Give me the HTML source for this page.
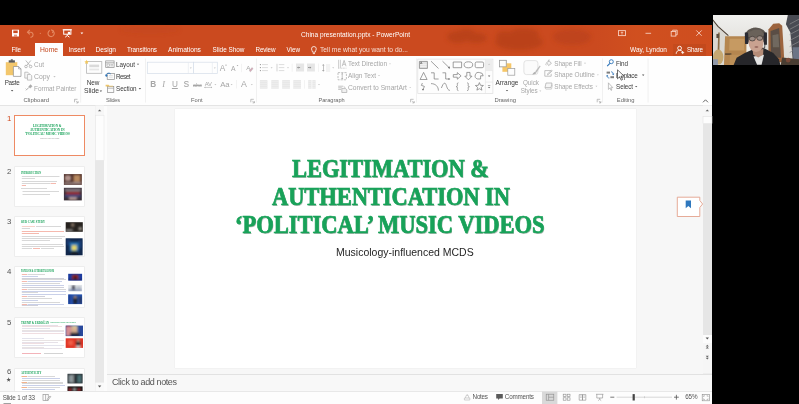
<!DOCTYPE html>
<html lang="en"><head><meta charset="utf-8"><title>China presentation.pptx - PowerPoint</title>
<style>
html,body{margin:0;padding:0;background:#000;}
body{width:799px;height:404px;position:relative;overflow:hidden;font-family:"Liberation Sans",sans-serif;}
.abs{position:absolute;}
#in{position:absolute;left:10px;top:10px;width:799px;height:404px;will-change:transform;}
#app{position:absolute;left:-10px;top:-10px;width:819px;height:424px;padding:0;overflow:hidden;}
.t{position:absolute;white-space:nowrap;}
#titlebar{left:-10px;top:25px;width:722px;height:31px;background:#CB4A1F;}
#hometab{left:35px;top:43px;width:27.5px;height:13px;background:#FEFEFE;}
#sharebtn{left:673px;top:44px;width:33px;height:12px;background:#B9431B;}
#ribbon{left:-10px;top:56px;width:722px;height:48.7px;background:#FEFEFE;border-bottom:0.8px solid #E4E4E4;}
#panel{left:-10px;top:105.5px;width:114px;height:285.5px;background:#F8F8F8;overflow:hidden;}
#gap{left:104px;top:105.5px;width:3px;height:285.5px;background:#FCFCFC;}
#pane{left:107px;top:105.5px;width:596px;height:268px;background:#F7F7F7;}
#slide{left:174.5px;top:109px;width:461px;height:259px;background:#fff;box-shadow:0 0 1px #d8d8d8;}
#notes{left:107px;top:373.5px;width:605px;height:17.5px;background:#F8F8F8;border-top:0.8px solid #E2E2E2;box-sizing:border-box;}
#status{left:-10px;top:391px;width:722px;height:30px;background:#FDFDFD;border-top:0.6px solid #E8E8E8;box-sizing:border-box;}
#vscroll{left:703px;top:105.5px;width:9px;height:268px;background:#E6E6E6;}
#pscroll{left:95.3px;top:105.5px;width:8.7px;height:285.5px;background:#E8E8E8;}
.thumb{position:absolute;left:15px;width:69px;height:39px;background:#fff;box-shadow:0 0 0 0.6px #E6E6E6;overflow:hidden;}
#webcam{left:712.5px;top:14.9px;width:86.5px;height:49.8px;background:#DDD9D0;overflow:hidden;}
svg{position:absolute;left:0;top:0;}
</style></head>
<body><div id="app"><div id="in">
<div id="titlebar" class="abs"></div>
<div id="hometab" class="abs"></div>
<div id="sharebtn" class="abs"></div>
<div id="ribbon" class="abs"></div>
<div id="panel" class="abs"></div>
<div id="pscroll" class="abs"></div>
<div id="gap" class="abs"></div>
<div id="pane" class="abs"></div>
<div id="vscroll" class="abs"></div>
<div id="slide" class="abs"></div>
<div id="notes" class="abs"></div>
<div id="status" class="abs"></div>
<div class="thumb" style="left:13.700px;top:114.7px;width:71.200px;height:41.7px;box-shadow:none;border:1.300px solid #EE8A63;box-sizing:border-box;"></div><div class="thumb" style="top:166.5px;height:39.5px;"></div><div class="thumb" style="top:217px;height:39.3px;"></div><div class="thumb" style="top:267.2px;height:40.0px;"></div><div class="thumb" style="top:317.7px;height:39.5px;"></div><div class="thumb" style="top:368.5px;height:22.5px;"></div>
<div id="webcam" class="abs"><svg width="86.500" height="49.800" viewBox="0 0 86 49.500" preserveAspectRatio="none"><defs><filter id="wb" x="-10%" y="-10%" width="120%" height="120%"><feGaussianBlur stdDeviation="0.550"/></filter><linearGradient id="wg" x1="0" y1="0" x2="0" y2="1"><stop offset="0" stop-color="#F0F0EE"/><stop offset="1" stop-color="#D9D6D0"/></linearGradient></defs><rect width="86" height="49.500" fill="url(#wg)"/><g filter="url(#wb)"><polygon points="-0.7,-0.1 -0.7,49.7 12.3,49.7 14.6,20.2 -0.7,3.9" fill="#DAD8D2"/><polyline points="-0.7,4.2 4.9,11.3 15.3,20.5" fill="none" stroke="#4A3C30" stroke-width="1"/><polygon points="12.0,21.1 33.4,21.1 33.4,49.7 10.9,49.7" fill="#B5864F"/><polygon points="16.5,23.5 31.1,23.5 31.1,35.4 16.1,35.4" fill="#C69A62"/><polygon points="12.0,38.1 18.3,38.1 18.3,39.6 12.0,39.6" fill="#5A4632"/><polygon points="16.8,39.6 30.2,39.6 30.2,49.7 16.5,49.7" fill="#BD9058"/><polygon points="33.4,29.2 39.4,29.2 39.4,39.6 33.4,39.6" fill="#F0EEE8"/><polygon points="5.2,17.3 6.7,17.3 6.4,35.1 4.6,35.1" fill="#8A6E48"/><ellipse cx="5.2" cy="41.8" rx="5.200" ry="7.500" fill="#C5A872"/><polygon points="3.4,18.8 6.1,18.8 6.1,22.9 3.4,22.9" fill="#5C5040"/><polygon points="-0.7,44.0 4.9,44.0 4.9,49.7 -0.7,49.7" fill="#9098A8"/><polygon points="55.1,14.3 59.9,8.7 65.8,8.1 68.8,10.6 71.0,47.0 55.1,47.0" fill="#9C643C"/><polygon points="57.2,15.8 65.8,12.8 67.6,42.5 57.6,42.5" fill="#5A4E44"/><polygon points="59.1,20.2 65.1,18.8 65.8,32.1 59.6,32.1" fill="#70685E"/><polygon points="74.4,-0.1 86.0,-0.1 86.0,44.0 79.2,44.0 76.9,17.3 72.5,9.1" fill="#4A4C52"/><polyline points="76.2,9.1 86.0,3.9" fill="none" stroke="#8C8C90" stroke-width=".700"/><polyline points="76.2,14.3 86.0,9.1" fill="none" stroke="#8C8C90" stroke-width=".700"/><polyline points="76.2,19.5 86.0,14.3" fill="none" stroke="#8C8C90" stroke-width=".700"/><polyline points="76.2,25.4 86.0,20.2" fill="none" stroke="#8C8C90" stroke-width=".700"/><polyline points="76.2,31.4 86.0,26.2" fill="none" stroke="#8C8C90" stroke-width=".700"/><polyline points="76.2,37.3 86.0,32.1" fill="none" stroke="#8C8C90" stroke-width=".700"/><polygon points="79.2,32.1 86.0,32.1 86.0,45.5 79.9,45.5" fill="#6C7486"/><polygon points="68.8,42.2 86.0,44.0 86.0,49.7 67.3,49.7" fill="#4A3C30"/><ellipse cx="74.7" cy="44.8" rx="2.400" ry="2.400" fill="#7A4A38"/><polygon points="20.5,49.7 23.5,42.5 31.6,37.8 40.6,33.9 51.3,33.3 59.9,37.8 65.5,44.0 67.0,49.7" fill="#25262A"/><polygon points="40.3,41.3 50.7,39.6 48.3,49.4 43.8,49.4" fill="#E4E4E4"/><polygon points="39.1,32.1 50.2,32.1 49.8,39.6 45.0,42.2 40.0,39.6" fill="#B58C78"/><ellipse cx="42.5" cy="21.0" rx="10.800" ry="8.500" fill="#5C5650"/><polygon points="31.6,17.3 34.9,17.3 34.9,28.9 31.9,28.9" fill="#2C2C30"/><polygon points="50.4,17.3 53.6,17.3 53.6,29.5 50.7,29.5" fill="#2C2C30"/><polyline points="51.7,28.9 51.3,32.9 48.0,33.9" fill="none" stroke="#2C2C30" stroke-width=".800"/><ellipse cx="42.8" cy="27.4" rx="7.400" ry="9.400" fill="#C9A290"/><polygon points="34.9,17.3 40.6,14.6 47.2,14.6 50.7,18.8 49.5,21.7 36.1,22.0" fill="#6A625A"/><polyline points="34.9,22.6 50.7,21.7" fill="none" stroke="#3A3430" stroke-width=".700"/><ellipse cx="39.1" cy="23.5" rx="3" ry="2.300" fill="#9C8C84" stroke="#3A3430" stroke-width=".700"/><ellipse cx="46.5" cy="22.9" rx="3" ry="2.300" fill="#9C8C84" stroke="#3A3430" stroke-width=".700"/><ellipse cx="43.2" cy="31.8" rx="2" ry=".800" fill="#8C5C54"/></g></svg></div>
<svg width="799" height="404" viewBox="0 0 799 404">
<g fill="#B03D17" opacity=".62" filter="url(#bl)"><ellipse cx="458" cy="37" rx="11" ry="6"/><ellipse cx="476" cy="38" rx="11" ry="5"/><ellipse cx="466" cy="33" rx="9" ry="4"/><ellipse cx="519" cy="42" rx="24" ry="8"/><ellipse cx="524" cy="34" rx="15" ry="6"/><ellipse cx="505" cy="36" rx="9" ry="5"/><ellipse cx="572" cy="37" rx="19" ry="8" opacity=".7"/><ellipse cx="150" cy="30" rx="30" ry="4" opacity=".25"/></g><rect x="596" y="25" width="116" height="31" fill="url(#tg)"/>
<defs><linearGradient id="tg" x1="0" y1="0" x2="1" y2="0"><stop offset="0" stop-color="#D4541F" stop-opacity="0"/><stop offset=".35" stop-color="#D4541F" stop-opacity=".55"/><stop offset="1" stop-color="#D4541F" stop-opacity=".35"/></linearGradient><filter id="bl" x="-30%" y="-30%" width="160%" height="160%"><feGaussianBlur stdDeviation="2"/></filter><filter id="b0" x="-5%" y="-5%" width="110%" height="110%"><feGaussianBlur stdDeviation="0.3"/></filter><filter id="b1" x="-30%" y="-30%" width="160%" height="160%"><feGaussianBlur stdDeviation="0.8"/></filter><filter id="b2" x="-30%" y="-30%" width="160%" height="160%"><feGaussianBlur stdDeviation="1.2"/></filter></defs>
<g><rect x="12" y="29.7" width="7" height="6.8" fill="#fff"/><rect x="13.3" y="30.5" width="4.4" height="2.6" fill="#CB4A1F"/><rect x="14" y="34.6" width="3" height="1.9" fill="#CB4A1F" opacity=".55"/></g>
<g fill="none" stroke="#E58A63" stroke-width="1.1"><path d="M27.6 32.2h3.6a2.6 2.6 0 0 1 0 5.0h-.8"/><path d="M29.8 30l-2.3 2.2 2.3 2.2" /></g><circle cx="40.3" cy="33.3" r=".6" fill="#E58A63"/>
<g fill="none" stroke="#E58A63" stroke-width="1.1"><path d="M53.2 31.2a3.1 3.1 0 1 1-3.2-.6"/><path d="M51.2 29.8l2.2 1.2-1 2.1"/></g>
<g fill="none" stroke="#fff" stroke-width="1"><path d="M62.7 29.8h9.2"/><rect x="63.7" y="29.8" width="7.2" height="4.4"/><path d="M67.3 34.2v1.3M65.2 37.2l2.1-1.7 2.1 1.7"/></g><circle cx="69" cy="33" r="1.3" fill="#fff"/>
<path d="M80.5 32.6h2.8l-1.4 1.7z" fill="#fff"/>
<g fill="none" stroke="#fff" stroke-width=".8"><path d="M312.6 52.2c0-1.4-1.1-1.7-1.1-3.3a2.4 2.4 0 0 1 4.8 0c0 1.6-1.1 1.9-1.1 3.3z"/><path d="M312.8 53.6h2.2"/></g>
<g fill="none" stroke="#F6CDBD" stroke-width=".9"><rect x="618.5" y="30.6" width="7" height="5"/><path d="M622 34.6v-2.6M620.8 33l1.2-1.2 1.2 1.2" stroke-width=".8"/><path d="M645.5 33.3h5.6"/><rect x="671.2" y="31.5" width="4.6" height="4.6"/><path d="M672.6 31.5v-1.3h4.6v4.6h-1.4"/><path d="M696.3 30.4l5.4 5.4M701.7 30.4l-5.4 5.4"/></g>
<g fill="none" stroke="#fff" stroke-width=".9"><circle cx="679.6" cy="48.2" r="1.9"/><path d="M676.2 53.8c0-2.4 1.6-3.4 3.4-3.4s3 .8 3.3 2"/><path d="M681.2 52.6h3M682.7 51.1v3" stroke-width=".8"/></g>
<rect x="80.4" y="58.5" width=".7" height="44" fill="#EBEBEB"/>
<rect x="145.2" y="58.5" width=".7" height="44" fill="#EBEBEB"/>
<rect x="256.0" y="58.5" width=".7" height="44" fill="#EBEBEB"/>
<rect x="416.0" y="58.5" width=".7" height="44" fill="#EBEBEB"/>
<rect x="602.2" y="58.5" width=".7" height="44" fill="#EBEBEB"/>
<rect x="647.7" y="58.5" width=".7" height="44" fill="#EBEBEB"/>
<g><rect x="5.8" y="62.2" width="11.5" height="13" fill="#F3C76C"/><rect x="8.7" y="60.3" width="6.2" height="2.3" fill="#5A5A5A"/><rect x="10.8" y="59.3" width="2" height="1.4" fill="#5A5A5A"/><path d="M13.4 66.5h5.2l2.4 2.4v7.5h-7.6z" fill="#fff" stroke="#8C8C8C" stroke-width=".7"/><path d="M18.6 66.5v2.4h2.4" fill="none" stroke="#8C8C8C" stroke-width=".6"/></g>
<path d="M10.90 90.00h2.4l-1.2 1.4z" fill="#555"/>
<g fill="none" stroke="#ABABAB" stroke-width=".8"><path d="M25.8 60.5l4.2 5.2M30.8 60.5l-4.2 5.2"/><circle cx="26" cy="66.5" r="1.3"/><circle cx="30.6" cy="66.5" r="1.3"/></g>
<g fill="#F8F8F8" stroke="#ABABAB" stroke-width=".7"><path d="M24.8 72.2h3l1.3 1.3v4.6h-4.3z"/><path d="M27.4 74.4h3l1.3 1.3v4.4h-4.3z"/></g>
<path d="M53.30 76.10h2.4l-1.2 1.4z" fill="#C4C4C4"/>
<g stroke="#ABABAB" fill="none"><path d="M26 90.3l3-3" stroke-width="1"/><path d="M28.6 86.6l2-2 1.6 1.6-2 2z" fill="#ABABAB" stroke-width=".4"/><path d="M25.5 88.5l1.2 1.2" stroke-width=".6"/></g>
<g fill="none" stroke="#999" stroke-width=".6"><path d="M74.5 102.3v-3h3"/><path d="M76.0 100.8l2 2M78.1 101.1v1.8h-1.8"/></g>
<g><rect x="86.6" y="61.6" width="15.2" height="11.7" fill="#FDFDFD" stroke="#B5B5B5" stroke-width=".8"/><rect x="89.3" y="64.6" width="9.8" height="2.6" fill="#DADADA"/><rect x="89.3" y="68.6" width="9.8" height="1.8" fill="#E6E6E6"/><path d="M86.6 59.8l.7 1.4 1.5.2-1.1 1 .3 1.5-1.4-.7-1.4.7.3-1.5-1.1-1 1.5-.2z" fill="#F2C75C"/></g>
<path d="M99.70 90.50h2.4l-1.2 1.4z" fill="#555"/>
<g fill="#FBFBFB" stroke="#8F8F8F" stroke-width=".7"><rect x="105.7" y="60.9" width="8.4" height="6.7"/><path d="M105.7 62.8h8.4" /><rect x="107" y="64" width="2.4" height="2.2" stroke-width=".5"/><path d="M110.4 64.4h2.6M110.4 65.8h2.6" stroke-width=".5"/></g>
<path d="M136.80 63.70h2.4l-1.2 1.4z" fill="#555"/>
<g><rect x="107.2" y="73.6" width="7.2" height="5.8" fill="#FBFBFB" stroke="#8F8F8F" stroke-width=".7"/><path d="M109 75.5h3.8M109 77.2h3.8" stroke="#C9C9C9" stroke-width=".5"/><path d="M106 76.2a2.8 2.8 0 0 1 4.6-2.4" fill="none" stroke="#2E74B8" stroke-width="1"/><path d="M105 74.6l1.2 2.4 1.6-1.6z" fill="#2E74B8"/></g>
<g><rect x="107.6" y="86.6" width="6.2" height="5.8" fill="#FBFBFB" stroke="#8F8F8F" stroke-width=".7"/><path d="M107.6 88.2h6.2" stroke="#8F8F8F" stroke-width=".6"/><path d="M105.6 84.7h3l.8 1h3.6v.9h-7.4z" fill="#EFC66A"/></g>
<path d="M138.70 88.10h2.4l-1.2 1.4z" fill="#555"/>
<g fill="#FEFEFE" stroke="#D5DDE8" stroke-width=".7"><rect x="147.3" y="62.2" width="46.1" height="11.4"/><rect x="193.4" y="62.2" width="23.9" height="11.4"/></g>
<path d="M188.3 62.5v10.8M212.3 62.5v10.8" stroke="#E3E8EF" stroke-width=".6"/>
<path d="M189.80 67.60h2l-1.0 1.2z" fill="#C4C4C4"/>
<path d="M213.80 67.60h2l-1.0 1.2z" fill="#C4C4C4"/>
<path d="M226 64.2l1 1.3h-2z" fill="#ABABAB"/><path d="M237.5 66.3l-.9-1.2h1.8z" fill="#ABABAB"/>
<rect x="241.4" y="63.8" width=".6" height="8.4" fill="#EBEBEB"/><rect x="236.3" y="80" width=".6" height="8.4" fill="#EBEBEB"/>
<path d="M249.3 70.8l2.6-3.2 1.2 1-2.6 3.2z" fill="#D9A7B8" stroke="#ABABAB" stroke-width=".4"/>
<path d="M214.40 84.00h2l-1.0 1.2z" fill="#C4C4C4"/>
<path d="M230.60 84.00h2l-1.0 1.2z" fill="#C4C4C4"/>
<path d="M250.80 84.00h2l-1.0 1.2z" fill="#C4C4C4"/>
<path d="M204.5 87.4h7.5" stroke="#ABABAB" stroke-width=".6"/><path d="M204.3 87.4l1-.8v1.6zM212.2 87.4l-1-.8v1.6z" fill="#ABABAB"/>
<g fill="none" stroke="#999" stroke-width=".6"><path d="M250.8 102.3v-3h3"/><path d="M252.3 100.8l2 2M254.4 101.1v1.8h-1.8"/></g>
<g fill="#8E8E8E"><circle cx="260.4" cy="64.6" r=".6"/><circle cx="260.4" cy="67.6" r=".6"/><circle cx="260.4" cy="70.6" r=".6"/></g>
<path d="M262 64.6H267.9M262 67.6H267.9M262 70.6H267.9" stroke="#CFCFCF" stroke-width="0.7"/>
<path d="M270.60 67.20h2l-1.0 1.2z" fill="#C4C4C4"/>
<path d="M277 63.8v7.6" stroke="#C2C2C2" stroke-width=".7"/>
<path d="M278.8 64.6H284.3M278.8 67.6H284.3M278.8 70.6H284.3" stroke="#CFCFCF" stroke-width="0.7"/>
<path d="M287.00 67.20h2l-1.0 1.2z" fill="#C4C4C4"/>
<rect x="291.8" y="63.6" width=".6" height="8.2" fill="#EBEBEB"/><rect x="318" y="63.6" width=".6" height="8.2" fill="#EBEBEB"/><rect x="304.2" y="80.2" width=".6" height="8.4" fill="#EBEBEB"/>
<rect x="296" y="63.5" width="8.1" height="8" fill="#E6E6E6"/><rect x="307" y="63.5" width="7.9" height="8" fill="#E6E6E6"/>
<path d="M297 67.6l1.5-1.2v2.4z" fill="#8A8A8A"/><rect x="298.3" y="67.2" width="1.8" height=".8" fill="#8A8A8A"/><path d="M311.3 67.6l-1.5-1.2v2.4z" fill="#8A8A8A"/><rect x="308" y="67.2" width="1.8" height=".8" fill="#8A8A8A"/>
<g fill="#A8A8A8"><path d="M323.3 63.9l1.3 1.6h-2.6zM323.3 71.7l1.3-1.6h-2.6z"/><rect x="323" y="65" width=".7" height="5.6"/></g>
<path d="M326 65H330.2M326 67H330.2M326 69H330.2M326 71H330.2" stroke="#D6D6D6" stroke-width="0.6"/>
<path d="M332.20 67.20h2l-1.0 1.2z" fill="#C4C4C4"/>
<rect x="259.9" y="80.1" width="7.5" height="8.6" fill="#E7E7E7"/>
<path d="M259.9 81.64999999999999H267.4M259.9 83.64999999999999H267.4M259.9 85.64999999999999H267.4M259.9 87.64999999999999H267.4" stroke="#F4F4F4" stroke-width=".6"/>
<rect x="271.3" y="80.1" width="7.4" height="8.6" fill="#E7E7E7"/>
<path d="M271.3 81.64999999999999H278.7M271.3 83.64999999999999H278.7M271.3 85.64999999999999H278.7M271.3 87.64999999999999H278.7" stroke="#F4F4F4" stroke-width=".6"/>
<rect x="282.2" y="80.1" width="7.7" height="8.6" fill="#E7E7E7"/>
<path d="M282.2 81.64999999999999H289.9M282.2 83.64999999999999H289.9M282.2 85.64999999999999H289.9M282.2 87.64999999999999H289.9" stroke="#F4F4F4" stroke-width=".6"/>
<rect x="293.3" y="80.1" width="7.7" height="8.6" fill="#E7E7E7"/>
<path d="M293.3 81.64999999999999H301M293.3 83.64999999999999H301M293.3 85.64999999999999H301M293.3 87.64999999999999H301" stroke="#F4F4F4" stroke-width=".6"/>
<rect x="308.2" y="80.1" width="3.3" height="8.6" fill="#E7E7E7"/><rect x="312.3" y="80.1" width="3.3" height="8.6" fill="#E7E7E7"/>
<path d="M308.2 81.64999999999999H315.6M308.2 83.64999999999999H315.6M308.2 85.64999999999999H315.6M308.2 87.64999999999999H315.6" stroke="#F4F4F4" stroke-width=".6"/>
<path d="M318.00 84.00h2l-1.0 1.2z" fill="#C4C4C4"/>
<g stroke="#ABABAB" fill="none" stroke-width=".6"><path d="M338.6 59.8v8M340.4 59.8v8"/><path d="M338 68.2h8.4" stroke-dasharray="1 .6"/><path d="M342.2 66.2l1.9-5.8 1.9 5.8M342.9 64.3h2.4" stroke-width=".7"/></g>
<path d="M389.00 63.40h2l-1.0 1.2z" fill="#C4C4C4"/>
<g stroke="#ABABAB" fill="none" stroke-width=".7"><rect x="338" y="72.6" width="8.4" height="7.2" stroke-dasharray="2.2 1"/><path d="M342.2 73.6v5.2" /><path d="M342.2 72.9l1.1 1.4h-2.2zM342.2 79.5l1.1-1.4h-2.2z" fill="#ABABAB" stroke="none"/></g>
<path d="M378.00 75.00h2l-1.0 1.2z" fill="#C4C4C4"/>
<g stroke="#ABABAB" fill="none" stroke-width=".7"><path d="M338.2 86.2h4.8M338.2 87.8h3.6M338.2 89.4h2.8"/><path d="M341.8 88.4h3.4l1.6 1.3v2.8h-5z" fill="#F0F0F0"/><path d="M343.6 86.4l1.8 1.4" /></g>
<path d="M409.20 86.90h2l-1.0 1.2z" fill="#C4C4C4"/>
<g fill="none" stroke="#999" stroke-width=".6"><path d="M410.6 102.3v-3h3"/><path d="M412.1 100.8l2 2M414.20000000000005 101.1v1.8h-1.8"/></g>
<rect x="417.8" y="59.1" width="75.1" height="34.5" fill="#FDFDFD" stroke="#DDDDDD" stroke-width=".7"/>
<rect x="485.5" y="59.4" width="7.1" height="11" fill="#EDEDED"/><path d="M485.4 59.4v34M485.4 70.6h7.4M485.4 82.1h7.4" stroke="#E2E2E2" stroke-width=".6" fill="none"/>
<path d="M489.1 63.6l1.2 1.5h-2.4z" fill="#D0D0D0"/>
<path d="M487.90 75.50h2.4l-1.2 1.4z" fill="#666"/>
<path d="M487.9 85.6h2.4" stroke="#666" stroke-width=".6"/>
<path d="M487.90 86.90h2.4l-1.2 1.4z" fill="#666"/>
<g fill="none" stroke="#777" stroke-width=".7" stroke-linejoin="round"><rect x="419.4" y="61.4" width="8" height="7" fill="#E4E4E4"/><path d="M420.2 64.6h6.4M420.2 66.4h6.4" stroke="#fff" stroke-width=".5"/><path d="M431 61.2l7.5 7.3"/><path d="M442.5 61.2l7.3 7.1"/><path d="M450 68.5l-2.2-.6 1.6-1.6z" fill="#666" stroke="none"/><rect x="453.2" y="62" width="8.4" height="5.7"/><ellipse cx="468.4" cy="64.8" rx="4.3" ry="3"/><rect x="475.2" y="62" width="8.4" height="5.7" rx="1.4"/><path d="M423.6 72.4l3.5 7.1h-7z"/><path d="M431 72.8h3.2v6.2h4.4"/><path d="M442.5 72.8h3.2v6.2h3.6"/><path d="M450.3 79l-1.8-1.1v2.2z" fill="#666" stroke="none"/><path d="M453.3 74.6h4v-2l3.8 3.3-3.8 3.3v-2h-4z"/><path d="M466.8 72.4h3.2v3.8h2l-3.6 3.6-3.6-3.6h2z"/><path d="M479.6 72.6a3.6 3.4 0 0 1 3.6 3.2h-2.6v3.2h-3a3.4 3.3 0 0 1 2-6.4z"/><path d="M422.4 83l-1 2.4 3 1-1.4 3.4"/><path d="M423 90.8l-1.2-2 2.2.4z" fill="#666" stroke="none"/><path d="M431 83.6c4.600 0 7.400 3 7.400 7"/><path d="M441.4 88c1.200-3 2-4.800 3.300-4.800 2 0 1.800 7.200 5.200 7.200"/><path d="M458.400 82.800c-1.600 0-1 1.600-1 2.600s-.5 1.300-1.200 1.300c.7 0 1.200.3 1.200 1.300s-.6 2.600 1 2.600"/><path d="M467.200 82.800c1.600 0 1 1.600 1 2.600s.5 1.300 1.200 1.300c-.7 0-1.200.3-1.200 1.300s.6 2.600-1 2.600"/><path d="M479.400 82.600l1.100 2.700 2.900.2-2.200 1.900.7 2.800-2.500-1.500-2.500 1.500.7-2.800-2.200-1.900 2.900-.2z"/></g>
<path d="M420.300 64l.9-2.200.9 2.200M420.600 63.400h1.200" fill="none" stroke="#555" stroke-width=".5"/>
<g stroke="#9A9A9A" stroke-width=".7"><rect x="499.400" y="60.300" width="6.800" height="6.500" fill="#FDFDFD"/><rect x="502.400" y="63.300" width="8.900" height="8.500" fill="#F6C667" stroke="none"/><rect x="499.400" y="60.300" width="6.800" height="6.500" fill="#FDFDFD"/><rect x="507.800" y="68.400" width="7" height="6.800" fill="#FDFDFD"/></g>
<path d="M505.80 89.90h2.4l-1.2 1.4z" fill="#555"/>
<rect x="523.900" y="60.600" width="14" height="14" rx="2.600" fill="#FBFBFB" stroke="#DCDCDC" stroke-width=".8"/><path d="M539.800 65.500l-4.600 6 1.400 1.100 4-6.300z" fill="#BDBDBD"/><path d="M535 71.800c-1.200.3-1.600 1.600-2.800 2.600 1.800.4 3.600-.2 4.200-1.600z" fill="#B0B0B0"/>
<path d="M539.30 90.60h2l-1.0 1.2z" fill="#C4C4C4"/>
<g fill="none" stroke="#ABABAB" stroke-width=".7"><path d="M546.600 62.600l2.600-1.800 2.200 2.600-2.800 2.200z" fill="#F4F4F4"/><path d="M548.400 61.400c-.4-1.400.6-2 1.200-1.400"/><path d="M546.200 63.400c-.5.800-.5 1.500 0 1.900" /></g>
<path d="M584.00 62.80h2l-1.0 1.2z" fill="#C4C4C4"/>
<g fill="none" stroke="#ABABAB" stroke-width=".7"><path d="M551 70.600h-6.200v5.600h6.400v-2.400"/><path d="M547 74.400l4.600-4.200.6.700-4.400 4z"/></g>
<path d="M596.90 74.40h2l-1.0 1.2z" fill="#C4C4C4"/>
<g stroke="#ABABAB" stroke-width=".7"><path d="M546 83h6l-1 4.600h-6z" fill="#F6F6F6"/><path d="M545 87.800l.8 1.300h5.700l1-4.600" fill="none" stroke="#BEBEBE"/></g>
<path d="M595.40 85.80h2l-1.0 1.2z" fill="#C4C4C4"/>
<g fill="none" stroke="#999" stroke-width=".6"><path d="M597.2 102.3v-3h3"/><path d="M598.7 100.8l2 2M600.8000000000001 101.1v1.8h-1.8"/></g>
<g fill="none" stroke="#2E74B8" stroke-width=".9"><circle cx="611.300" cy="61.700" r="2"/><path d="M609.900 63.300l-2.700 2.900" stroke-width="1.100"/></g>
<g><path d="M606.600 72.600h3.400" stroke="#7E7E7E" stroke-width="2"/><path d="M610.400 77.200h3.600" stroke="#7E7E7E" stroke-width="2"/><path d="M611 71.800c1.500 0 2.200.8 2.200 2.400" fill="none" stroke="#2E74B8" stroke-width=".8"/><path d="M613.200 75.300l-1.200-1.500h2.400z" fill="#2E74B8"/><path d="M609.400 78c-1.500 0-2.200-.8-2.200-2.200" fill="none" stroke="#2E74B8" stroke-width=".8"/><path d="M607.200 74.800l-1.200 1.400h2.400z" fill="#2E74B8"/></g>
<path d="M608.400 82.800v6.600l1.500-1.400 1.100 2.400.9-.4-1.100-2.300 2-.1z" fill="#FBFBFB" stroke="#9A9A9A" stroke-width=".6" stroke-linejoin="round"/>
<path d="M642.00 74.50h2.4l-1.2 1.4z" fill="#555"/>
<path d="M635.00 85.90h2.4l-1.2 1.4z" fill="#555"/>
<path d="M703 102.300l2.500-2.500 2.500 2.500" fill="none" stroke="#555" stroke-width=".9"/>
<g filter="url(#b0)">
<rect x="21.8" y="176.10" width="37.7" height="0.8" fill="#CFCFCF"/>
<rect x="21.8" y="178.10" width="13.2" height="0.8" fill="#CFCFCF"/>
<rect x="21.8" y="181.10" width="35.2" height="0.8" fill="#CFCFCF"/>
<rect x="21.8" y="183.10" width="28.2" height="0.8" fill="#CFCFCF"/>
<rect x="50.5" y="183.10" width="5.5" height="0.8" fill="#F3A79A"/>
<rect x="21.8" y="185.10" width="4.2" height="0.8" fill="#F3A79A"/>
<rect x="21" y="188.10" width="26.0" height="0.8" fill="#CFCFCF"/>
<rect x="22.5" y="191.10" width="36.5" height="0.8" fill="#CFCFCF"/>
<rect x="22.5" y="194.10" width="27.5" height="0.8" fill="#CFCFCF"/>
<rect x="21.8" y="226.10" width="13.2" height="0.8" fill="#F6C8BE"/>
<rect x="36" y="226.10" width="25.0" height="0.8" fill="#CFCFCF"/>
<rect x="21.8" y="228.10" width="8.2" height="0.8" fill="#CFCFCF"/>
<rect x="21.8" y="231.10" width="42.2" height="0.8" fill="#F3A79A"/>
<rect x="21.8" y="233.10" width="17.2" height="0.8" fill="#F3A79A"/>
<rect x="21.8" y="236.10" width="43.2" height="0.8" fill="#CFCFCF"/>
<rect x="21.8" y="238.10" width="40.2" height="0.8" fill="#CFCFCF"/>
<rect x="21.8" y="240.10" width="28.2" height="0.8" fill="#CFCFCF"/>
<rect x="21.8" y="244.10" width="41.2" height="0.8" fill="#CFCFCF"/>
<rect x="21.8" y="246.10" width="42.2" height="0.8" fill="#CFCFCF"/>
<rect x="21.8" y="248.10" width="10.2" height="0.8" fill="#CFCFCF"/>
<rect x="33" y="248.10" width="7.0" height="0.8" fill="#F3A79A"/>
<rect x="41" y="248.10" width="13.0" height="0.8" fill="#CFCFCF"/>
<rect x="21.8" y="274.10" width="5.2" height="0.8" fill="#F3A79A"/>
<rect x="27.5" y="274.10" width="17.5" height="0.8" fill="#CFCFCF"/>
<rect x="21.8" y="276.10" width="16.2" height="0.8" fill="#BCC4E4"/>
<rect x="21.8" y="278.10" width="42.2" height="0.8" fill="#C4C4D0"/>
<rect x="21.8" y="279.10" width="44.2" height="0.8" fill="#CFCFCF"/>
<rect x="21.8" y="281.10" width="5.2" height="0.8" fill="#F3A79A"/>
<rect x="27.5" y="281.10" width="34.5" height="0.8" fill="#BCC4E4"/>
<rect x="21.8" y="283.10" width="38.2" height="0.8" fill="#CFCFCF"/>
<rect x="21.8" y="285.10" width="42.2" height="0.8" fill="#BCC4E4"/>
<rect x="21.8" y="287.10" width="42.2" height="0.8" fill="#C4C4D0"/>
<rect x="21.8" y="289.10" width="5.2" height="0.8" fill="#F3A79A"/>
<rect x="27.5" y="289.10" width="38.5" height="0.8" fill="#CFCFCF"/>
<rect x="21.8" y="291.10" width="44.2" height="0.8" fill="#BCC4E4"/>
<rect x="21.8" y="292.10" width="16.2" height="0.8" fill="#CFCFCF"/>
<rect x="21.8" y="294.10" width="44.2" height="0.8" fill="#BCC4E4"/>
<rect x="21.8" y="296.10" width="5.2" height="0.8" fill="#F3A79A"/>
<rect x="27.5" y="296.10" width="17.5" height="0.8" fill="#C4C4D0"/>
<rect x="21.8" y="298.10" width="30.2" height="0.8" fill="#CFCFCF"/>
<rect x="21.8" y="300.10" width="16.2" height="0.8" fill="#BCC4E4"/>
<rect x="21.8" y="302.10" width="38.2" height="0.8" fill="#CFCFCF"/>
<rect x="21.8" y="304.10" width="5.2" height="0.8" fill="#F3A79A"/>
<rect x="27.5" y="304.10" width="36.5" height="0.8" fill="#BCC4E4"/>
<rect x="21.8" y="305.10" width="16.2" height="0.8" fill="#C4C4D0"/>
<rect x="22" y="325.10" width="36.0" height="0.8" fill="#E0DAE2"/>
<rect x="22" y="326.10" width="40.0" height="0.8" fill="#ECD6DA"/>
<rect x="22" y="328.10" width="28.0" height="0.8" fill="#DCDCE8"/>
<rect x="22" y="330.10" width="42.0" height="0.8" fill="#E2DCDC"/>
<rect x="22" y="331.10" width="42.0" height="0.8" fill="#E0DAE2"/>
<rect x="22" y="333.10" width="42.0" height="0.8" fill="#ECD6DA"/>
<rect x="22" y="338.10" width="22.0" height="0.8" fill="#DCDCE8"/>
<rect x="22" y="340.10" width="42.0" height="0.8" fill="#E2DCDC"/>
<rect x="22" y="342.10" width="36.0" height="0.8" fill="#E0DAE2"/>
<rect x="22" y="343.10" width="22.0" height="0.8" fill="#ECD6DA"/>
<rect x="22" y="345.10" width="42.0" height="0.8" fill="#DCDCE8"/>
<rect x="22" y="347.10" width="22.0" height="0.8" fill="#E2DCDC"/>
<rect x="22" y="348.10" width="40.0" height="0.8" fill="#E0DAE2"/>
<rect x="22" y="353.10" width="19.0" height="0.8" fill="#F0A0A8"/>
<rect x="44" y="353.10" width="19.0" height="0.8" fill="#C8C8C8"/>
<rect x="21.5" y="376.10" width="5.5" height="0.8" fill="#F0A070"/>
<rect x="27.5" y="376.10" width="27.5" height="0.8" fill="#CFCFCF"/>
<rect x="22" y="378.10" width="38.0" height="0.8" fill="#BCC4E4"/>
<rect x="22" y="380.10" width="38.0" height="0.8" fill="#CFCFCF"/>
<rect x="21.5" y="382.10" width="5.5" height="0.8" fill="#F0A070"/>
<rect x="27.5" y="382.10" width="35.5" height="0.8" fill="#CFCFCF"/>
<rect x="22" y="383.10" width="41.0" height="0.8" fill="#CFCFCF"/>
<rect x="22" y="385.10" width="43.0" height="0.8" fill="#BCC4E4"/>
<rect x="21.5" y="387.10" width="5.5" height="0.8" fill="#F0A070"/>
<rect x="27.5" y="387.10" width="32.5" height="0.8" fill="#CFCFCF"/>
<rect x="22" y="389.10" width="33.0" height="0.8" fill="#BCC4E4"/>
</g>
<g>
<clipPath id="c1"><rect x="63.9" y="174.1" width="17.9" height="10.8"/></clipPath>
<rect x="63.9" y="174.1" width="17.9" height="10.8" fill="#4A2A24"/><g clip-path="url(#c1)"><g filter="url(#b1)">
<rect x="65.4" y="175.6" width="5" height="5" fill="#E8D8D0"/>
<rect x="73.4" y="174.9" width="7" height="7" fill="#B88A60"/>
<rect x="63.9" y="182.7" width="17.9" height="1.2" fill="#D8D0D0"/>
<rect x="66.9" y="176.6" width="2" height="3" fill="#7A2020"/>
</g></g>
<clipPath id="c2"><rect x="63.9" y="187.8" width="17.9" height="12.6"/></clipPath>
<rect x="63.9" y="187.8" width="17.9" height="12.6" fill="#3A3038"/><g clip-path="url(#c2)"><g filter="url(#b1)">
<rect x="64.9" y="189.3" width="16" height="1.2" fill="#C8C0C8"/>
<rect x="65.9" y="191.8" width="14" height="2.5" fill="#A83038"/>
<rect x="64.9" y="195.3" width="16" height="1.5" fill="#3850A0"/>
<rect x="68.9" y="197.3" width="8" height="2.5" fill="#C8A8A0"/>
</g></g>
<clipPath id="c3"><rect x="65.7" y="222.2" width="17.1" height="9.6"/></clipPath>
<rect x="65.7" y="222.2" width="17.1" height="9.6" fill="#26221E"/><g clip-path="url(#c3)"><g filter="url(#b1)">
<rect x="71.2" y="223.2" width="3" height="3.5" fill="#8A7868"/>
<rect x="78.7" y="227.2" width="3" height="3" fill="#B0A8A0"/>
<rect x="65.7" y="229.7" width="7" height="1.3" fill="#D0D0D0"/>
</g></g>
<clipPath id="c4"><rect x="65.7" y="238.3" width="16.9" height="17.0"/></clipPath>
<rect x="65.7" y="238.3" width="16.9" height="17.0" fill="#12284C"/><g clip-path="url(#c4)"><g filter="url(#b1)">
<rect x="69.7" y="242.3" width="9" height="9" fill="#2878B8"/>
<rect x="71.7" y="245.3" width="5" height="5" fill="#E8D860"/>
<rect x="66.7" y="239.3" width="3" height="6" fill="#183C78"/>
<rect x="78.7" y="240.3" width="3" height="8" fill="#183C78"/>
<rect x="70.7" y="251.3" width="7" height="3" fill="#181818"/>
</g></g>
<clipPath id="c5"><rect x="68.2" y="273.8" width="13.9" height="6.8"/></clipPath>
<rect x="68.2" y="273.8" width="13.9" height="6.8" fill="#1C3CA0"/><g clip-path="url(#c5)"><g filter="url(#b1)">
<rect x="72.2" y="274.8" width="6" height="4.5" fill="#B82828"/>
<rect x="73.7" y="275.8" width="3" height="3.5" fill="#281818"/>
<rect x="68.2" y="279.3" width="13.9" height="1.3" fill="#10184C"/>
</g></g>
<clipPath id="c6"><rect x="68.2" y="284.9" width="13.9" height="6.4"/></clipPath>
<rect x="68.2" y="284.9" width="13.9" height="6.4" fill="#E4E8EC"/><g clip-path="url(#c6)"><g filter="url(#b1)">
<rect x="72.2" y="285.4" width="2.5" height="5.5" fill="#2A2A38"/>
<rect x="68.2" y="289.5" width="13.9" height="1.8" fill="#6878A0"/>
<rect x="76.2" y="286.9" width="5" height="1.2" fill="#8890A0"/>
</g></g>
<clipPath id="c7"><rect x="68.2" y="294.4" width="13.9" height="9.7"/></clipPath>
<rect x="68.2" y="294.4" width="13.9" height="9.7" fill="#2454B4"/><g clip-path="url(#c7)"><g filter="url(#b1)">
<rect x="73.2" y="295.9" width="4" height="8.2" fill="#1E2230"/>
<rect x="74.2" y="295.9" width="2" height="2.2" fill="#C8A090"/>
<rect x="78.7" y="296.4" width="3.4" height="7.7" fill="#283868"/>
<rect x="68.2" y="294.4" width="2.5" height="9.7" fill="#1A3C8C"/>
</g></g>
<clipPath id="c8"><rect x="65.7" y="325.6" width="17.3" height="10.5"/></clipPath>
<rect x="65.7" y="325.6" width="17.3" height="10.5" fill="#28489C"/><g clip-path="url(#c8)"><g filter="url(#b1)">
<rect x="65.7" y="325.6" width="5.5" height="10.5" fill="#C83038"/>
<rect x="65.7" y="327.6" width="5.5" height="1.2" fill="#F0F0F0"/>
<rect x="65.7" y="330.6" width="5.5" height="1.2" fill="#F0F0F0"/>
<rect x="65.7" y="333.6" width="5.5" height="1.2" fill="#F0F0F0"/>
<rect x="71.2" y="326.6" width="6.5" height="6.5" fill="#D8B090"/>
<rect x="70.2" y="332.6" width="9" height="3.5" fill="#1C2030"/>
<rect x="71.7" y="325.6" width="6" height="1.8" fill="#E8D8A0"/>
</g></g>
<clipPath id="c9"><rect x="65.7" y="338.3" width="17.3" height="9.6"/></clipPath>
<rect x="65.7" y="338.3" width="17.3" height="9.6" fill="#E03424"/><g clip-path="url(#c9)"><g filter="url(#b1)">
<rect x="76.2" y="340.3" width="4" height="7.6" fill="#2A2428"/>
<rect x="77.2" y="339.5" width="2.2" height="2.4" fill="#D0A890"/>
<rect x="68.2" y="340.3" width="5" height="5" fill="#F06048"/>
<rect x="75.7" y="345.8" width="5" height="2.1" fill="#E8E8E8"/>
</g></g>
<clipPath id="c10"><rect x="67.5" y="373.8" width="15.1" height="9.6"/></clipPath>
<rect x="67.5" y="373.8" width="15.1" height="9.6" fill="#2C3438"/><g clip-path="url(#c10)"><g filter="url(#b1)">
<rect x="68.5" y="374.8" width="4" height="8" fill="#8C989C"/>
<rect x="73.5" y="375.8" width="3" height="7" fill="#181C20"/>
<rect x="77.5" y="374.8" width="4" height="8" fill="#4C7478"/>
<rect x="72.5" y="374.3" width="1" height="9" fill="#C8D0D0"/>
</g></g>
<clipPath id="c11"><rect x="67.5" y="386.4" width="15.1" height="4.6"/></clipPath>
<rect x="67.5" y="386.4" width="15.1" height="4.6" fill="#181818"/><g clip-path="url(#c11)"><g filter="url(#b1)">
<rect x="68.5" y="388.4" width="3" height="2.6" fill="#C82830"/>
<rect x="73.5" y="387.9" width="2" height="3.1" fill="#E8E8E8"/>
<rect x="77.5" y="388.4" width="3" height="2.6" fill="#C82830"/>
</g></g>
</g>
<rect x="95.300" y="105.500" width="8.700" height="9.600" fill="#F7F7F7"/><rect x="95.300" y="115.200" width="8.700" height="45.200" fill="#FDFDFD" stroke="#E4E4E4" stroke-width=".5"/><rect x="95.300" y="382.600" width="8.700" height="8.400" fill="#FAFAFA"/>
<path d="M99.600 109.400l1.700 1.900h-3.400z" fill="#666"/><path d="M99.600 387.400l1.700-1.900h-3.400z" fill="#555"/>
<rect x="703" y="105.500" width="9" height="10.600" fill="#F7F7F7"/><rect x="703" y="116.300" width="9" height="7.400" fill="#FDFDFD" stroke="#E0E0E0" stroke-width=".5"/><rect x="703" y="335" width="9" height="38.500" fill="#F6F6F6"/><rect x="703" y="335" width="9" height="8" fill="#FCFCFC"/>
<path d="M707.300 109.400l1.700 1.900h-3.400z" fill="#666"/><path d="M707.300 339.400l1.700-1.900h-3.400z" fill="#555"/>
<g fill="#666"><path d="M707.300 344.800l1.600 1.700h-3.200zM707.300 346.800l1.600 1.700h-3.200z"/><path d="M707.300 359.400l1.600-1.700h-3.200zM707.300 357.400l1.600-1.700h-3.200z"/></g>
<path d="M677.300 197.200h22.500v3.300l2.800 3.500-2.800 3.500v9h-22.500z" fill="#fff" stroke="#E3A28C" stroke-width=".9" stroke-linejoin="round"/>
<path d="M685.700 200.400h5.300v7.800l-2.650-2.300-2.650 2.300z" fill="#2F78BE"/>
<rect x="542" y="391.500" width="15.400" height="12.500" fill="#D9D9D9"/>
<g fill="none" stroke="#8A8A8A" stroke-width=".6"><rect x="43" y="394.600" width="5.200" height="5.800"/><path d="M45.600 394.600v5.800"/><path d="M47 399.400l3-3.400.8.700-3 3.400z" fill="#FBFBFB"/></g>
<g fill="none" stroke="#B5B5B5" stroke-width=".6"><path d="M464.400 398h5.400v2h-5.400z"/><path d="M465.400 398l.8-2.600h2l.8 2.600"/><path d="M467.200 395.400v-1.300"/></g>
<path d="M496.200 394h6.600v4.400h-3.200l-1.500 1.500v-1.500h-1.900z" fill="#5A5A5A"/>
<g fill="none" stroke="#8A8A8A" stroke-width=".6"><rect x="546.200" y="394.200" width="7.600" height="6"/><path d="M548.600 394.200v6M548.600 397.200h5.200"/><rect x="563.200" y="394.200" width="2.800" height="2.400"/><rect x="567.200" y="394.200" width="2.800" height="2.400"/><rect x="563.200" y="397.800" width="2.800" height="2.400"/><rect x="567.200" y="397.800" width="2.800" height="2.400"/><path d="M579.200 394.600h3.300v5.600h-3.300zM582.500 394.600h3.300v5.600h-3.300z"/><path d="M580 396h1.800M580 397.400h1.800M583.300 396h1.800M583.300 397.400h1.800" stroke-width=".4"/><path d="M596 394.300h7.400M596.800 394.300v3.700h5.800v-3.700M599.700 398v1.300M598.200 400.600l1.500-1.300 1.500 1.300"/></g>
<path d="M610.300 397.200h4" stroke="#555" stroke-width=".8"/><path d="M616.600 397.200h55.400" stroke="#BDBDBD" stroke-width=".6"/><rect x="644" y="396.200" width=".6" height="2" fill="#BDBDBD"/><rect x="632.600" y="394.100" width="2.200" height="6.400" fill="#444"/><path d="M674 397.200h4.800M676.400 394.800v4.800" stroke="#555" stroke-width=".8"/>
<g fill="none" stroke="#8A8A8A" stroke-width=".6"><rect x="702.200" y="394.600" width="7.200" height="6.200"/><path d="M703.600 397v-1.200h1.400M708 397v-1.200h-1.400M703.600 398.400v1.200h1.400M708 398.400v1.200h-1.400" stroke-width=".5"/></g>
<rect x="3.500" y="403.300" width="7.500" height=".7" fill="#777"/>
<polygon points="8.65,377.30 9.21,378.93 10.93,378.96 9.55,379.99 10.06,381.64 8.65,380.65 7.24,381.64 7.75,379.99 6.37,378.96 8.09,378.93" fill="#555"/>
</svg>
<span class="t" style="left:301.00px;top:30.00px;font-size:6.58px;line-height:9px;color:#fff;">China presentation.pptx - PowerPoint</span>
<span class="t" style="left:11.50px;top:45.50px;font-size:6.3px;line-height:8px;color:#fff;letter-spacing:-0.217px;">File</span>
<span class="t" style="left:68.50px;top:45.00px;font-size:6.6px;line-height:9px;color:#fff;">Insert</span>
<span class="t" style="left:95.50px;top:45.00px;font-size:6.59px;line-height:9px;color:#fff;">Design</span>
<span class="t" style="left:127.00px;top:45.50px;font-size:6.3px;line-height:8px;color:#fff;letter-spacing:-0.058px;">Transitions</span>
<span class="t" style="left:168.00px;top:45.00px;font-size:6.67px;line-height:9px;color:#fff;">Animations</span>
<span class="t" style="left:212.50px;top:45.50px;font-size:6.4px;line-height:8px;color:#fff;">Slide Show</span>
<span class="t" style="left:255.50px;top:45.50px;font-size:6.3px;line-height:8px;color:#fff;letter-spacing:-0.131px;">Review</span>
<span class="t" style="left:286.50px;top:45.50px;font-size:6.3px;line-height:8px;color:#fff;letter-spacing:-0.014px;">View</span>
<span class="t" style="left:40.00px;top:45.00px;font-size:6.75px;line-height:9px;color:#C4471D;">Home</span>
<span class="t" style="left:320.00px;top:45.00px;font-size:6.68px;line-height:9px;color:#F6DDD3;">Tell me what you want to do...</span>
<span class="t" style="left:630.00px;top:45.50px;font-size:6.5px;line-height:8px;color:#fff;">Way, Lyndon</span>
<span class="t" style="left:687.00px;top:45.50px;font-size:6.3px;line-height:8px;color:#fff;letter-spacing:-0.203px;">Share</span>
<span class="t" style="left:4.70px;top:78.50px;font-size:6.3px;line-height:8px;color:#3A3A3A;letter-spacing:-0.278px;">Paste</span>
<span class="t" style="left:34.00px;top:60.50px;font-size:6.43px;line-height:8px;color:#A6A6A6;">Cut</span>
<span class="t" style="left:34.00px;top:72.00px;font-size:6.85px;line-height:9px;color:#A6A6A6;">Copy</span>
<span class="t" style="left:34.00px;top:84.50px;font-size:6.43px;line-height:8px;color:#A6A6A6;">Format Painter</span>
<span class="t" style="left:23.50px;top:96.00px;font-size:5.96px;line-height:8px;color:#666;">Clipboard</span>
<span class="t" style="left:86.70px;top:78.50px;font-size:6.4px;line-height:8px;color:#3A3A3A;">New</span>
<span class="t" style="left:84.00px;top:86.00px;font-size:6.75px;line-height:9px;color:#3A3A3A;">Slide</span>
<span class="t" style="left:116.00px;top:60.50px;font-size:6.33px;line-height:8px;color:#3A3A3A;">Layout</span>
<span class="t" style="left:116.00px;top:72.50px;font-size:6.3px;line-height:8px;color:#3A3A3A;letter-spacing:-0.489px;">Reset</span>
<span class="t" style="left:116.00px;top:84.50px;font-size:6.3px;line-height:8px;color:#3A3A3A;letter-spacing:-0.069px;">Section</span>
<span class="t" style="left:106.00px;top:96.50px;font-size:5.6px;line-height:7px;color:#666;letter-spacing:-0.251px;">Slides</span>
<span class="t" style="left:191.00px;top:96.50px;font-size:5.75px;line-height:7px;color:#666;">Font</span>
<span class="t" style="left:318.50px;top:96.50px;font-size:5.61px;line-height:7px;color:#666;">Paragraph</span>
<span class="t" style="left:494.40px;top:96.00px;font-size:5.89px;line-height:8px;color:#666;">Drawing</span>
<span class="t" style="left:616.80px;top:96.00px;font-size:5.82px;line-height:8px;color:#666;">Editing</span>
<span class="t" style="left:150.20px;top:79.00px;font-size:8.2px;line-height:11px;color:#A6A6A6;font-weight:bold;">B</span>
<span class="t" style="left:162.30px;top:79.00px;font-size:8.4px;line-height:11px;color:#A6A6A6;font-family:'Liberation Serif',serif;font-style:italic;">I</span>
<span class="t" style="left:171.90px;top:79.00px;font-size:8.2px;line-height:11px;color:#A6A6A6;text-decoration:underline;text-decoration-thickness:.6px;text-underline-offset:.6px;">U</span>
<span class="t" style="left:183.40px;top:79.00px;font-size:8.2px;line-height:11px;color:#A6A6A6;text-shadow:.6px .4px 0 #d8d8d8;">S</span>
<span class="t" style="left:193.00px;top:81.50px;font-size:5.46px;line-height:7px;color:#A6A6A6;text-decoration:line-through;text-decoration-thickness:.5px;">abc</span>
<span class="t" style="left:204.70px;top:80.00px;font-size:5.79px;line-height:8px;color:#A6A6A6;letter-spacing:0.006px;">AV</span>
<span class="t" style="left:220.20px;top:79.50px;font-size:7.77px;line-height:10px;color:#A6A6A6;">Aa</span>
<span class="t" style="left:241.00px;top:78.50px;font-size:8.8px;line-height:11px;color:#A6A6A6;">A</span>
<span class="t" style="left:219.80px;top:62.50px;font-size:8.3px;line-height:11px;color:#A6A6A6;">A</span>
<span class="t" style="left:231.10px;top:64.00px;font-size:6.8px;line-height:9px;color:#A6A6A6;">A</span>
<span class="t" style="left:246.20px;top:63.50px;font-size:6.2px;line-height:8px;color:#A6A6A6;">A</span>
<span class="t" style="left:348.00px;top:59.50px;font-size:6.44px;line-height:8px;color:#A6A6A6;">Text Direction</span>
<span class="t" style="left:348.00px;top:71.50px;font-size:6.49px;line-height:8px;color:#A6A6A6;">Align Text</span>
<span class="t" style="left:348.00px;top:83.00px;font-size:6.68px;line-height:9px;color:#A6A6A6;">Convert to SmartArt</span>
<span class="t" style="left:495.40px;top:78.50px;font-size:6.49px;line-height:8px;color:#3A3A3A;">Arrange</span>
<span class="t" style="left:523.00px;top:78.50px;font-size:6.3px;line-height:8px;color:#A6A6A6;letter-spacing:-0.026px;">Quick</span>
<span class="t" style="left:520.70px;top:86.50px;font-size:6.3px;line-height:8px;color:#A6A6A6;letter-spacing:-0.051px;">Styles</span>
<span class="t" style="left:554.30px;top:59.50px;font-size:6.3px;line-height:8px;color:#A6A6A6;letter-spacing:-0.080px;">Shape Fill</span>
<span class="t" style="left:554.30px;top:70.50px;font-size:6.39px;line-height:8px;color:#A6A6A6;">Shape Outline</span>
<span class="t" style="left:554.30px;top:82.50px;font-size:6.3px;line-height:8px;color:#A6A6A6;letter-spacing:-0.043px;">Shape Effects</span>
<span class="t" style="left:616.10px;top:59.50px;font-size:6.3px;line-height:8px;color:#3A3A3A;letter-spacing:-0.119px;">Find</span>
<span class="t" style="left:616.10px;top:71.50px;font-size:6.3px;line-height:8px;color:#3A3A3A;letter-spacing:-0.236px;">Replace</span>
<span class="t" style="left:616.10px;top:82.50px;font-size:6.3px;line-height:8px;color:#3A3A3A;letter-spacing:-0.122px;">Select</span>
<span class="t" style="left:7.00px;top:113.50px;font-size:7.8px;line-height:10px;color:#D0491D;">1</span>
<span class="t" style="left:6.90px;top:166.50px;font-size:7.8px;line-height:10px;color:#555;">2</span>
<span class="t" style="left:6.90px;top:216.50px;font-size:7.8px;line-height:10px;color:#555;">3</span>
<span class="t" style="left:6.90px;top:266.50px;font-size:7.8px;line-height:10px;color:#555;">4</span>
<span class="t" style="left:6.90px;top:317.50px;font-size:7.8px;line-height:10px;color:#555;">5</span>
<span class="t" style="left:6.90px;top:366.50px;font-size:7.8px;line-height:10px;color:#555;">6</span>
<span class="t" style="left:32.90px;top:123.50px;font-size:3.5px;line-height:5px;color:#12A055;font-weight:bold;font-family:'Liberation Serif',serif;transform:scaleX(0.9266);transform-origin:0 50%;">LEGITIMATION &amp;</span>
<span class="t" style="left:30.00px;top:127.50px;font-size:3.5px;line-height:5px;color:#12A055;font-weight:bold;font-family:'Liberation Serif',serif;transform:scaleX(0.9280);transform-origin:0 50%;">AUTHENTICATION IN</span>
<span class="t" style="left:24.90px;top:131.50px;font-size:3.5px;line-height:5px;color:#12A055;font-weight:bold;font-family:'Liberation Serif',serif;transform:scaleX(0.9321);transform-origin:0 50%;">‘POLITICAL’ MUSIC VIDEOS</span>
<span class="t" style="left:40.30px;top:137.00px;font-size:1.7px;line-height:2px;color:#999;transform:scaleX(0.8745);transform-origin:0 50%;">Musicology-influenced MCDS</span>
<span class="t" style="left:20.90px;top:171.00px;font-size:3.3px;line-height:4px;color:#12A055;font-weight:bold;font-family:'Liberation Serif',serif;transform:scaleX(0.7613);transform-origin:0 50%;">INTRODUCTION</span>
<span class="t" style="left:20.90px;top:220.00px;font-size:3.3px;line-height:4px;color:#12A055;font-weight:bold;font-family:'Liberation Serif',serif;transform:scaleX(0.8284);transform-origin:0 50%;">OUR CASE STUDY</span>
<span class="t" style="left:20.90px;top:269.00px;font-size:3.0px;line-height:4px;color:#12A055;font-weight:bold;font-family:'Liberation Serif',serif;transform:scaleX(0.6455);transform-origin:0 50%;">POPULISM &amp; AUTHORITARIANISM</span>
<span class="t" style="left:20.90px;top:321.00px;font-size:3.3px;line-height:4px;color:#12A055;font-weight:bold;font-family:'Liberation Serif',serif;transform:scaleX(0.8468);transform-origin:0 50%;">TRUMP &amp; ERDOĞAN</span>
<span class="t" style="left:50.00px;top:320.50px;font-size:2.2px;line-height:3px;color:#12A055;font-weight:bold;font-family:'Liberation Serif',serif;transform:scaleX(0.7466);transform-origin:0 50%;">AUTHENTICATION STRATEGIES</span>
<span class="t" style="left:20.90px;top:371.00px;font-size:3.2px;line-height:4px;color:#12A055;font-weight:bold;font-family:'Liberation Serif',serif;transform:scaleX(0.8136);transform-origin:0 50%;">AUTHENTICITY</span>
<span class="t" style="left:112.00px;top:376.00px;font-size:9px;line-height:12px;color:#555;letter-spacing:-0.385px;">Click to add notes</span>
<span class="t" style="left:2.80px;top:393.50px;font-size:6.3px;line-height:8px;color:#555;letter-spacing:-0.236px;">Slide 1 of 33</span>
<span class="t" style="left:472.60px;top:392.50px;font-size:6.3px;line-height:8px;color:#555;letter-spacing:-0.264px;">Notes</span>
<span class="t" style="left:504.80px;top:392.50px;font-size:6.3px;line-height:8px;color:#555;letter-spacing:-0.180px;">Comments</span>
<span class="t" style="left:685.30px;top:392.50px;font-size:6.3px;line-height:8px;color:#555;letter-spacing:-0.205px;">65%</span>
<span class="t" style="left:292.00px;top:152.50px;font-size:24.5px;line-height:32px;color:#18A259;font-weight:bold;font-family:'Liberation Serif',serif;text-shadow:0.8px 0.8px 0.6px rgba(90,120,100,.5);-webkit-text-stroke:0.7px #18A259;transform:scaleX(0.9150);transform-origin:0 50%;">LEGITIMATION &amp;</span>
<span class="t" style="left:271.80px;top:180.50px;font-size:24.5px;line-height:32px;color:#18A259;font-weight:bold;font-family:'Liberation Serif',serif;text-shadow:0.8px 0.8px 0.6px rgba(90,120,100,.5);-webkit-text-stroke:0.7px #18A259;transform:scaleX(0.9145);transform-origin:0 50%;">AUTHENTICATION IN</span>
<span class="t" style="left:235.20px;top:208.50px;font-size:24.5px;line-height:32px;color:#18A259;font-weight:bold;font-family:'Liberation Serif',serif;text-shadow:0.8px 0.8px 0.6px rgba(90,120,100,.5);-webkit-text-stroke:0.7px #18A259;transform:scaleX(0.9179);transform-origin:0 50%;">‘POLITICAL’ MUSIC VIDEOS</span>
<span class="t" style="left:336.40px;top:245.50px;font-size:10.4px;line-height:14px;color:#262626;transform:scaleX(1.0102);transform-origin:0 50%;">Musicology-influenced MCDS</span>
<svg width="799" height="404" viewBox="0 0 799 404"><path d="M617.500 69.800v9l2.100-2 1.600 3.400 1.400-.7-1.600-3.300 3-.1z" fill="#fff" stroke="#333" stroke-width=".7" stroke-linejoin="round"/></svg>
</div></div>
</body></html>
